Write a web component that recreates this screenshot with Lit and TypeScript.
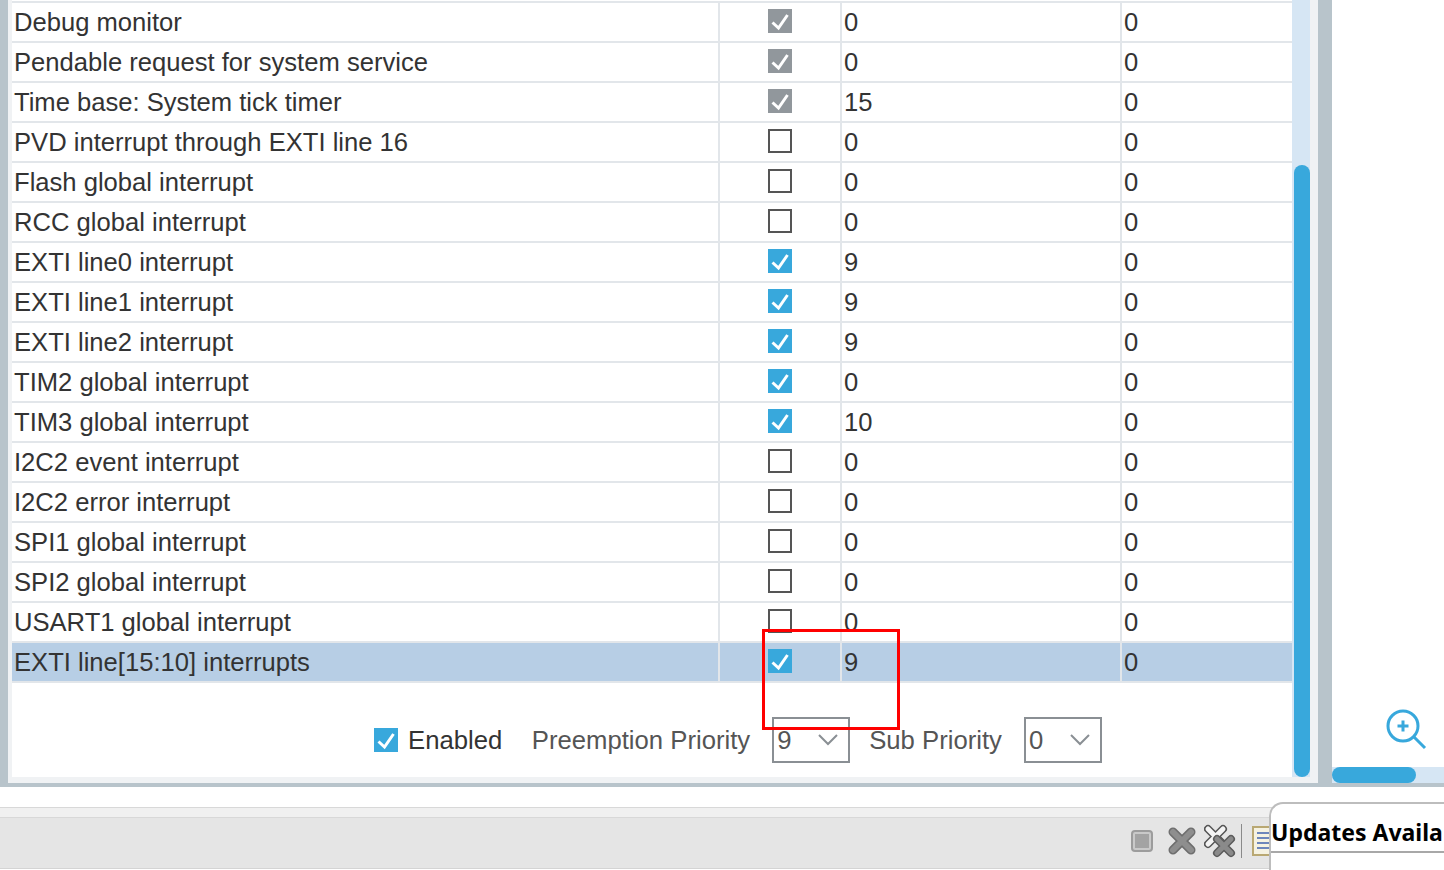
import { LitElement, html, css, svg } from "lit";
import { customElement } from "lit/decorators.js";

type Row = [string, "off" | "on" | "fixed", string, string?];
const rows: Row[] = [
  ["Debug monitor", "fixed", "0"],
  ["Pendable request for system service", "fixed", "0"],
  ["Time base: System tick timer", "fixed", "15"],
  ["PVD interrupt through EXTI line 16", "off", "0"],
  ["Flash global interrupt", "off", "0"],
  ["RCC global interrupt", "off", "0"],
  ["EXTI line0 interrupt", "on", "9"],
  ["EXTI line1 interrupt", "on", "9"],
  ["EXTI line2 interrupt", "on", "9"],
  ["TIM2 global interrupt", "on", "0"],
  ["TIM3 global interrupt", "on", "10"],
  ["I2C2 event interrupt", "off", "0"],
  ["I2C2 error interrupt", "off", "0"],
  ["SPI1 global interrupt", "off", "0"],
  ["SPI2 global interrupt", "off", "0"],
  ["USART1 global interrupt", "off", "0"],
  ["EXTI line[15:10] interrupts", "on", "9", "sel"],
];

const check = svg`<svg width="24" height="24" viewBox="0 0 24 24"><path d="M4.5 13.5 L10.5 19 L19.5 6" fill="none" stroke="#fff" stroke-width="3"/></svg>`;

@customElement("app-root")
export class AppRoot extends LitElement {
  static styles = css`
    :host { display: block; width: 1444px; height: 870px; overflow: hidden; position: relative; background: #fff;
      font-family: "Liberation Sans", Arial, sans-serif; font-size: 25.6px; color: #333; }
    .top { display: flex; height: 783px; }
    .edge { width: 8px; background: #b8c4cb; }
    .pad { width: 4px; background: #f0f2f4; }
    .main { width: 1280px; display: flex; flex-direction: column; background: #fff; box-sizing: border-box; height: 783px; border-bottom: 6px solid #f0f2f4; }
    .table { padding-top: 1px; }
    .row { display: grid; grid-template-columns: 706px 122px 280px 172px; height: 40px; box-sizing: border-box; border-top: 2px solid #e2e6ea; }
    .row:last-child { height: 42px; border-bottom: 2px solid #e2e6ea; }
    .row.sel { background: #b7cee5; }
    .cell { display: flex; align-items: center; padding-left: 2px; line-height: 36px; white-space: nowrap; }
    .cell + .cell { border-left: 2px solid #e2e6ea; padding-left: 2px; }
    .cbcell { justify-content: flex-start; padding: 0 0 2px 48px !important; }
    .cb { width: 24px; height: 24px; box-sizing: border-box; flex: none; display: block; }
    .cb svg { display: block; }
    .cb.off { border: 2px solid #555; background: #fff; }
    .cb.on { background: #38a8dc; }
    .cb.fixed { background: #91979c; }
    .controls { display: flex; align-items: center; height: 46px; margin-top: 34px; padding-left: 362px; font-size: 25.7px; }
    .lab { margin-left: 10px; margin-right: 29.5px; }
    .muted { color: #555; margin-right: 22px; }
    .select { width: 78px; height: 46px; box-sizing: border-box; border: 2px solid #8a8f94; display: flex; align-items: center;
      justify-content: space-between; padding: 0 10px 0 3px; margin-right: 19px; color: #555; }
    .sbwrap { width: 26px; background: #f0f2f4; display: flex; }
    .vtrack { width: 18px; background: #d6e6f4; height: 777px; display: flex; flex-direction: column; align-items: flex-end; padding-top: 165px; box-sizing: border-box; }
    .vthumb { width: 16px; flex: 1; background: #38a8dc; border-radius: 8px; }
    .gutter { width: 14px; background: #b8c4cb; }
    .right { flex: 1; display: flex; flex-direction: column; justify-content: flex-end; }
    .zoomwrap { flex: 1; display: flex; align-items: flex-end; justify-content: flex-end; padding: 0 16px 17px 0; }
    .htrack { height: 16px; background: #d6e6f4; }
    .hthumb { width: 84px; height: 16px; background: #38a8dc; border-radius: 8px; }
    .base { height: 4px; background: #b8c4cb; }
    .status { height: 83px; display: flex; flex-direction: column; }
    .s1 { height: 20px; background: #fff; border-bottom: 1px solid #d8d8d8; }
    .s2 { height: 9px; background: #f0f0f0; border-bottom: 1px solid #d8d8d8; }
    .s3 { height: 46px; background: #e5e5e5; display: flex; align-items: center; padding: 0 0 4px 1131px; border-bottom: 1px solid #d4d4d4; }
    .s3 svg { display: block; flex: none; }
    .x1 { margin-left: 15px; }
    .x2 { margin-left: 8px; }
    .sep { width: 1px; height: 34px; background: #8a8a8a; margin: 0 10px 0 5px; }
    .mark { position: absolute; left: 762px; top: 629px; width: 138px; height: 101px; box-sizing: border-box; border: 3px solid #f00; pointer-events: none; }
    .popup { position: absolute; left: 1269px; top: 802px; width: 175px; height: 68px; box-sizing: border-box; background: #fff;
      border: 2px solid #bdbdbd; border-right: 0; border-bottom: 0; border-top-left-radius: 14px; }
    .ptitle { font-family: "Noto Sans", sans-serif; font-weight: 700; font-size: 23px; line-height: 32px; color: #000; height: 49px; box-sizing: border-box;
      padding-top: 12px; border-bottom: 2px solid #a8a8a8; white-space: nowrap; }
  `;

  private box(state: string) {
    return html`<span class="cb ${state}">${state === "off" ? "" : check}</span>`;
  }

  private select(v: string) {
    return html`<div class="select"><span>${v}</span><svg width="20" height="12" viewBox="0 0 20 12"><path d="M1 1 L10 10 L19 1" fill="none" stroke="#8a8f94" stroke-width="2"/></svg></div>`;
  }

  render() {
    return html`
      <div class="top">
        <div class="edge"></div>
        <div class="pad"></div>
        <div class="main">
          <div class="table">
            ${rows.map(
              (r) => html`<div class="row ${r[3] ? "sel" : ""}">
                <div class="cell">${r[0]}</div>
                <div class="cell cbcell">${this.box(r[1])}</div>
                <div class="cell">${r[2]}</div>
                <div class="cell">0</div>
              </div>`
            )}
          </div>
          <div class="controls">
            ${this.box("on")}
            <span class="lab">Enabled</span>
            <span class="muted">Preemption Priority</span>
            ${this.select("9")}
            <span class="muted">Sub Priority</span>
            ${this.select("0")}
          </div>
        </div>
        <div class="sbwrap"><div class="vtrack"><div class="vthumb"></div></div></div>
        <div class="gutter"></div>
        <div class="right">
          <div class="zoomwrap">
            <svg width="44" height="42" viewBox="0 0 44 42" fill="none" stroke="#38a8dc">
              <circle cx="19" cy="18" r="15" stroke-width="3"/>
              <path d="M30 29 L41 40" stroke-width="3"/>
              <path d="M13.5 18 H24.5 M19 12.5 V23.5" stroke-width="3"/>
            </svg>
          </div>
          <div class="htrack"><div class="hthumb"></div></div>
        </div>
      </div>
      <div class="base"></div>
      <div class="status">
        <div class="s1"></div>
        <div class="s2"></div>
        <div class="s3">
          <svg width="22" height="22" viewBox="0 0 22 22"><rect x="1" y="1" width="20" height="20" rx="3" fill="#c9c9c9" stroke="#9c9c9c" stroke-width="2"/><rect x="4" y="4" width="14" height="14" fill="#a3a3a3"/></svg>
          <svg class="x1" width="28" height="28" viewBox="0 0 28 28">
            <path d="M5 5 L23 23 M23 5 L5 23" stroke="#6e6e6e" stroke-width="9" stroke-linecap="round"/>
            <path d="M5 5 L23 23 M23 5 L5 23" stroke="#8e8e8e" stroke-width="6" stroke-linecap="round"/>
          </svg>
          <svg class="x2" width="32" height="34" viewBox="0 0 32 34" fill="none">
            <path d="M4 5 L19 20 M19 5 L4 20" stroke="#555" stroke-width="8" stroke-linecap="round"/>
            <path d="M4 5 L19 20 M19 5 L4 20" stroke="#f4f4f4" stroke-width="5" stroke-linecap="round"/>
            <path d="M13 15 L27 29 M27 15 L13 29" stroke="#5c5c5c" stroke-width="8" stroke-linecap="round"/>
            <path d="M13 15 L27 29 M27 15 L13 29" stroke="#8a8a8a" stroke-width="5" stroke-linecap="round"/>
          </svg>
          <div class="sep"></div>
          <svg width="20" height="30" viewBox="0 0 20 30"><rect x="1" y="1" width="18" height="28" fill="#f5f2e2" stroke="#b9a873" stroke-width="2"/><path d="M5 7 H18 M5 12 H18 M5 17 H18 M5 22 H18" stroke="#6d86bb" stroke-width="2"/></svg>
        </div>
      </div>
      <div class="mark"></div>
      <div class="popup"><div class="ptitle">Updates Availa</div></div>
    `;
  }
}
